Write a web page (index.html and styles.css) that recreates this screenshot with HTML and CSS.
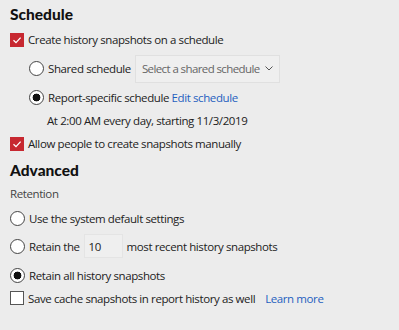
FILE: index.html
```html
<!DOCTYPE html>
<html>
  <head>
    <title>Snapshot settings</title>
    <meta name="viewport" content="width=device-width, initial-scale=1.0" />
    <link rel="stylesheet" href="styles.css">
  </head>
  <body>
    <h2 class="section-title">Schedule</h2>
    <div class="row">
      <span class="check checked"><svg viewBox="0 0 14 14" width="14" height="14"><path d="M3.5 7.2 L6 9.6 L10.6 4.6" fill="none" stroke="#fff" stroke-width="1.3"/></svg></span>
      <span>Create history snapshots on a schedule</span>
    </div>
    <div class="row indent">
      <span class="radio"></span>
      <span>Shared schedule</span>
      <span class="select"><span>Select a shared schedule</span>
        <svg class="chevron" viewBox="0 0 8 5" width="8" height="5"><path d="M0.5 0.5 L4 4 L7.5 0.5" fill="none" stroke="#555" stroke-width="1"/></svg>
      </span>
    </div>
    <div class="row indent">
      <span class="radio selected"></span>
      <span>Report-specific schedule <a class="link" href="#">Edit schedule</a></span>
    </div>
    <div class="note">At 2:00 AM every day, starting 11/3/2019</div>
    <div class="row">
      <span class="check checked"><svg viewBox="0 0 14 14" width="14" height="14"><path d="M3.5 7.2 L6 9.6 L10.6 4.6" fill="none" stroke="#fff" stroke-width="1.3"/></svg></span>
      <span>Allow people to create snapshots manually</span>
    </div>

    <h2 class="section-title advanced">Advanced</h2>
    <div class="label">Retention</div>
    <div class="row short">
      <span class="radio"></span>
      <span>Use the system default settings</span>
    </div>
    <div class="row tall">
      <span class="radio"></span>
      <span>Retain the</span>
      <span class="number">10</span>
      <span>most recent history snapshots</span>
    </div>
    <div class="row mid">
      <span class="radio selected"></span>
      <span>Retain all history snapshots</span>
    </div>
    <div class="row tiny">
      <span class="check"></span>
      <span>Save cache snapshots in report history as well</span>
      <a class="link learn" href="#">Learn more</a>
    </div>
  </body>
</html>
```

FILE: styles.css
```css
body {
  margin: 0;
  padding: 0 10px;
  background: #ececec;
  color: #222;
  font-family: "Open Sans", "Noto Sans", sans-serif;
  font-size: 11.5px;
  letter-spacing: -0.4px;
}
.section-title {
  margin: 0;
  height: 25px;
  padding-top: 2px;
  box-sizing: border-box;
  line-height: 25px;
  font-family: Lato, "Open Sans", sans-serif;
  font-size: 15.5px;
  font-weight: 900;
  letter-spacing: 0;
  color: #111;
}
.advanced {
  height: 24px;
  padding-top: 0;
  line-height: 24px;
}
.row {
  display: flex;
  align-items: center;
  gap: 4px;
  height: 29px;
  white-space: nowrap;
}
.row.short {
  height: 24px;
}
.row.tall {
  height: 32px;
}
.row.mid {
  height: 26px;
}
.row.tiny {
  height: 20px;
}
.indent {
  padding-left: 19px;
}
.check {
  width: 14px;
  height: 14px;
  box-sizing: border-box;
  border: 1px solid #555;
  background: #fff;
  flex: none;
}
.check.checked {
  background: #c72830;
  border-color: #c72830;
}
.check svg {
  display: block;
  margin: -1px;
}
.radio {
  width: 15px;
  height: 15px;
  box-sizing: border-box;
  border: 1px solid #444;
  border-radius: 50%;
  background: #fff;
  flex: none;
}
.radio.selected {
  background: radial-gradient(circle, #111 0 3.6px, #fff 4.2px);
}
.select {
  display: flex;
  align-items: center;
  justify-content: space-between;
  width: 145px;
  height: 28px;
  box-sizing: border-box;
  padding: 0 6px 0 6px;
  border: 1px solid #e0e0e0;
  background: #efefef;
  color: #666;
  letter-spacing: -0.6px;
}
.chevron {
  flex: none;
}
.link {
  color: #1f5fbf;
  text-decoration: none;
}
.note {
  height: 17px;
  line-height: 17px;
  padding-left: 37px;
}
.label {
  height: 24px;
  line-height: 24px;
  color: #444;
}
.number {
  width: 39px;
  height: 24px;
  line-height: 24px;
  box-sizing: border-box;
  padding-left: 4px;
  border: 1px solid #e4e4e4;
  background: #efefef;
  flex: none;
}
.learn {
  margin-left: 6px;
}
```
